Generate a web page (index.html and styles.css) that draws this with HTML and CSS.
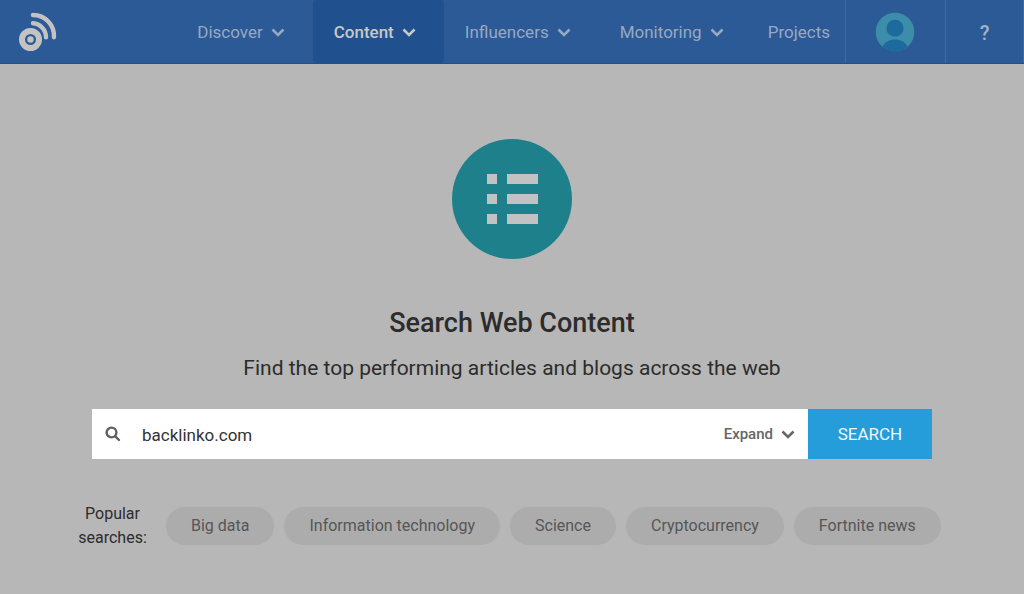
FILE: index.html
```html
<!DOCTYPE html>
<html lang="en">
<head>
<meta charset="utf-8">
<meta name="viewport" content="width=device-width, initial-scale=1">
<title>Search Web Content</title>
<link rel="stylesheet" href="styles.css">
</head>
<body>
<header class="topbar">
  <a class="logo" href="#" aria-label="Home">
    <svg width="40" height="42" viewBox="0 0 40 42" fill="none" stroke="currentColor">
      <circle cx="12.500" cy="28.500" r="8.500" stroke-width="6"/>
      <circle cx="12.500" cy="28.500" r="3.200" fill="currentColor" stroke="none"/>
      <path d="M15 12.200A14 14 0 0 1 28 26.200M15 4A21 21 0 0 1 36 26.200" stroke-width="4.400" stroke-linecap="round"/>
    </svg>
  </a>
  <nav class="nav">
    <a class="nav-item" href="#">Discover <svg class="chevron" viewBox="0 0 14 9"><path d="M1.500 1.500L7 7L12.500 1.500"/></svg></a>
    <a class="nav-item active" href="#" aria-current="page">Content <svg class="chevron" viewBox="0 0 14 9"><path d="M1.500 1.500L7 7L12.500 1.500"/></svg></a>
    <a class="nav-item" href="#">Influencers <svg class="chevron" viewBox="0 0 14 9"><path d="M1.500 1.500L7 7L12.500 1.500"/></svg></a>
    <a class="nav-item" href="#">Monitoring <svg class="chevron" viewBox="0 0 14 9"><path d="M1.500 1.500L7 7L12.500 1.500"/></svg></a>
    <a class="nav-item plain" href="#">Projects</a>
  </nav>
  <button class="account" type="button" aria-label="Account">
    <svg width="40" height="40" viewBox="0 0 40 40">
      <circle cx="20" cy="20" r="19.300" fill="#3b8da9"/>
      <circle cx="20" cy="16.300" r="8.500" fill="#1d6a9e"/>
      <path d="M7.500 34.500C12 25 28 25 32.500 34.500A19.300 19.300 0 0 1 7.500 34.500Z" fill="#1d6a9e"/>
    </svg>
  </button>
  <button class="help" type="button" aria-label="Help">?</button>
</header>
<main class="page">
  <svg class="hero-icon" viewBox="0 0 120 120">
    <circle cx="60" cy="60" r="60" fill="#1d808b"/>
    <path fill="#c2c2c2" d="M35 35h10v10H35zM55 35h31v10H55zM35 55h10v10H35zM55 55h31v10H55zM35 75h10v10H35zM55 75h31v10H55z"/>
  </svg>
  <h1 class="title">Search Web Content</h1>
  <p class="subtitle">Find the top performing articles and blogs across the web</p>
  <form class="search">
    <svg class="search-icon" viewBox="0 0 16 16"><circle cx="6.500" cy="6.500" r="4.900"/><path d="M10.300 10.300L14 14"/></svg>
    <input class="search-input" type="text" value="backlinko.com" aria-label="Search web content">
    <button class="expand" type="button">Expand <svg class="chevron" viewBox="0 0 14 9"><path d="M1.500 1.500L7 7L12.500 1.500"/></svg></button>
    <button class="submit" type="submit">SEARCH</button>
  </form>
  <div class="popular">
    <p class="popular-label">Popular searches:</p>
    <a class="chip" href="#">Big data</a>
    <a class="chip" href="#">Information technology</a>
    <a class="chip" href="#">Science</a>
    <a class="chip" href="#">Cryptocurrency</a>
    <a class="chip" href="#">Fortnite news</a>
  </div>
</main>
</body>
</html>
```
FILE: styles.css
```css
* { box-sizing: border-box; }
body {
  margin: 0;
  background: #b7b7b7;
  color: #2c2c2c;
  font-family: Roboto, "Liberation Sans", sans-serif;
}
a { color: inherit; text-decoration: none; }
button { border: 0; background: none; font: inherit; cursor: pointer; }
.topbar {
  display: flex;
  height: 64px;
  background: #2c5a97;
  border-bottom: 1px solid #255087;
  color: #97a9c2;
  font-size: 17px;
}
.logo { display: flex; align-items: center; padding-left: 18px; color: #c3c3c3; }
.logo svg { display: block; }
.nav { display: flex; flex: 1; justify-content: flex-end; }
.nav-item {
  display: flex;
  align-items: center;
  gap: 8px;
  padding: 1px 28px 0 21px;
}
.nav-item.active { background: #21508e; color: #c6c8ca; font-weight: 500; border-radius: 3px; }
.nav-item.plain { padding: 1px 15px 0 16px; }
.chevron {
  width: 14px;
  height: 9px;
  fill: none;
  stroke: currentColor;
  stroke-width: 2.5px;
}
.account { width: 101px; padding: 0 1px 0 0; border: solid #44699f; border-width: 0 1px; }
.account svg { display: block; margin: 0 auto; }
.help { width: 78px; padding: 2px 0 0; border-right: 1px solid #44699f; color: #a5b2c6; font-size: 20px; font-weight: 500; }
.page { display: flex; flex-direction: column; align-items: center; padding: 75px 78px 0; }
.hero-icon { width: 120px; height: 120px; }
.title { margin: 48px 0 0; font-size: 27px; line-height: 32px; font-weight: 500; }
.subtitle { margin: 16px 0 0; font-size: 21px; line-height: 26px; }
.search {
  display: flex;
  align-items: center;
  width: calc(100% - 28px);
  height: 50px;
  margin-top: 28px;
  background: #fff;
}
.search-icon {
  width: 16px;
  height: 16px;
  margin: 0 21px 0 13px;
  fill: none;
  stroke: #606060;
  stroke-width: 2.4px;
  stroke-linecap: round;
}
.search-input {
  flex: 1;
  min-width: 0;
  height: 50px;
  padding: 2px 0 0;
  border: 0;
  outline: 0;
  background: none;
  color: #333;
  font: 17px Roboto, "Liberation Sans", sans-serif;
}
.expand {
  display: flex;
  align-items: center;
  gap: 8px;
  padding: 0 13px 0 0;
  color: #666;
  font-size: 15px;
  font-weight: 500;
}
.submit { align-self: stretch; width: 124px; padding: 0; background: #259ddb; color: #eef8fd; font-size: 17px; }
.popular { display: flex; align-items: center; gap: 10px; width: 100%; margin-top: 43px; }
.popular-label { width: 69px; margin: 0 9px 0 0; font-size: 16px; line-height: 24px; text-align: center; }
.chip {
  padding: 9px 25px;
  border-radius: 20px;
  background: #acacac;
  color: #565656;
  font-size: 16px;
  line-height: 20px;
  white-space: nowrap;
}
```
